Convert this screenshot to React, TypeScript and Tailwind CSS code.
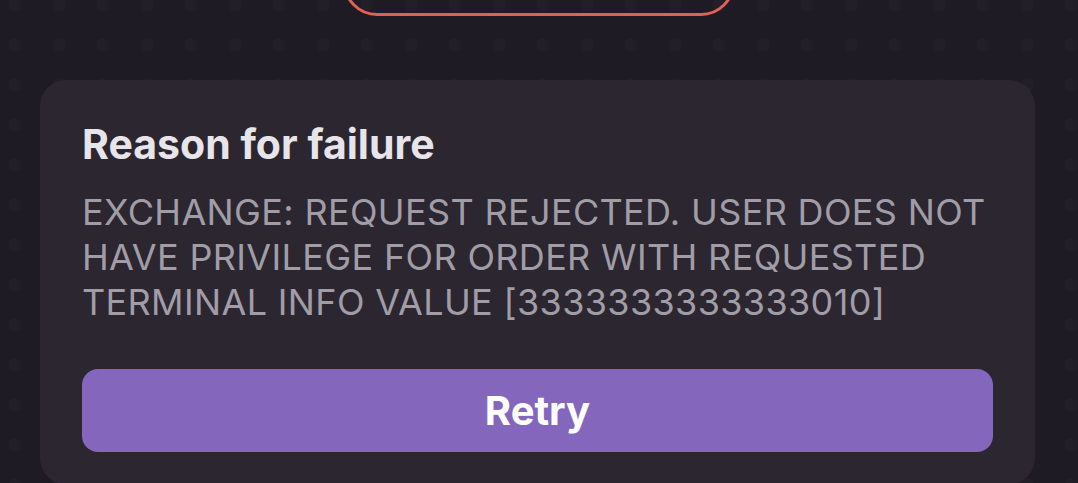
import React from "react";

// 注文失敗の理由を表示するカード

function App() {
    return (
        <div
            className="w-[1078px] h-[483px] overflow-hidden bg-[#1e1b24] bg-[radial-gradient(circle,#231f29_6px,transparent_7px)] bg-size-[44px_40px] bg-position-[-7px_-15px] flex flex-col items-center"
            style={{ fontFamily: "Inter, 'Liberation Sans', sans-serif" }}
        >
            <div className="-mt-[60px] w-[392px] h-[76px] shrink-0 rounded-[34px] border-[3px] border-[#df6353]" />

            <div className="mt-[64px] mr-[3px] w-[995px] shrink-0 rounded-[26px] bg-[#2b2630] px-[42px] pt-[40px] pb-[32px]">
                <h2 className="text-[41px] leading-[48px] font-bold text-[#e7e5ea]">
                    Reason for failure
                </h2>
                <p className="mt-[22px] text-[36px] leading-[45px] tracking-[0.35px] text-[#a19da7] uppercase">
                    Exchange: Request rejected. User does not have privilege
                    for order with requested terminal info value
                    [3333333333333010]
                </p>
                <button
                    type="button"
                    className="mt-[44px] w-full h-[83px] rounded-[16px] bg-[#8467bd] text-white text-[40px] font-bold"
                >
                    Retry
                </button>
            </div>
        </div>
    );
}

export default App;
